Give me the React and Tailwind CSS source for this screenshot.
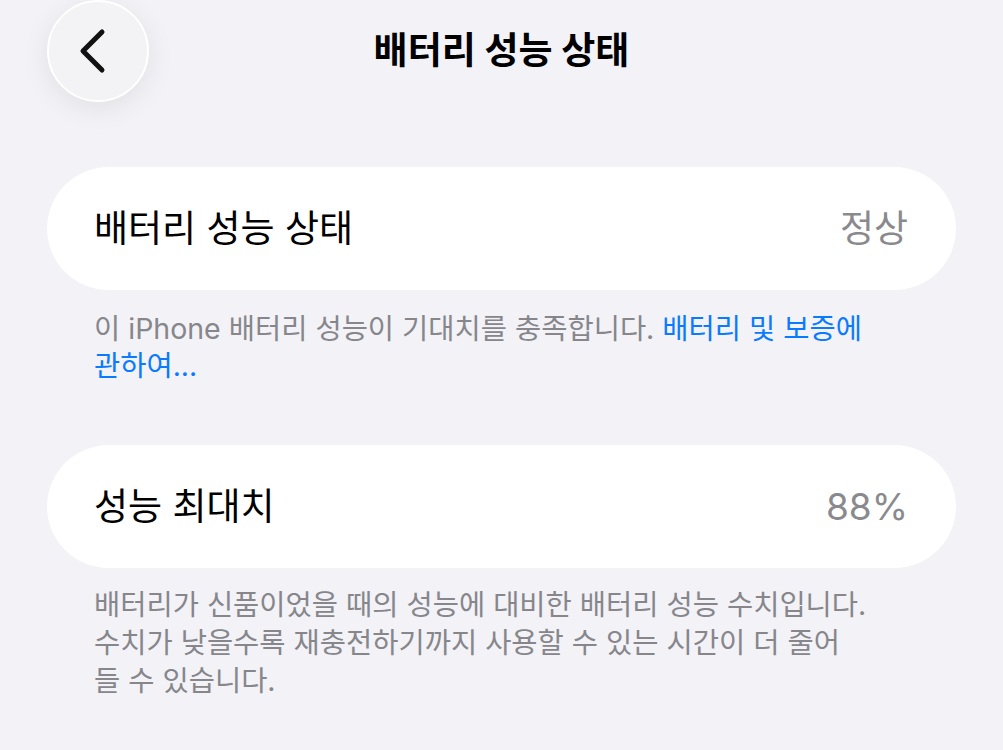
import React from "react";

const FONT = { fontFamily: '"Inter", "Noto Sans CJK KR", "Noto Sans", sans-serif' };

function Row({ label, value }) {
  return (
    <div className="mx-[47px] flex h-[123px] items-center justify-between rounded-full bg-white pl-[47px] pr-[48px]">
      <span className="text-[37px] text-black">{label}</span>
      <span className="text-[37px] text-[#8a8a8e]">{value}</span>
    </div>
  );
}

export default function App() {
  return (
    <div className="h-[750px] w-[1003px] overflow-hidden bg-[#f2f2f7]" style={FONT}>
      {/* header */}
      <div className="relative flex h-[102px] items-center justify-center">
        <button className="absolute left-[47px] top-0 flex h-[102px] w-[102px] items-center justify-center rounded-full border-2 border-white bg-[#f3f3f5] shadow-[0_6px_28px_rgba(0,0,0,0.08)]">
          <svg width="40" height="48" viewBox="0 0 40 48" fill="none">
            <path d="M24 5L5 24L24 43" stroke="#111" strokeWidth="5" strokeLinecap="round" strokeLinejoin="round" />
          </svg>
        </button>
        <h1 className="text-[37px] font-bold text-black">배터리 성능 상태</h1>
      </div>

      <div className="h-[65px]" />
      <Row label="배터리 성능 상태" value="정상" />
      <p className="px-[94px] pt-[20px] text-[28.5px] leading-[37px] text-[#86868b]">
        이 iPhone 배터리 성능이 기대치를 충족합니다. <span className="text-[#0a7aff]">배터리 및 보증에<br />관하여...</span>
      </p>

      <div className="h-[61px]" />
      <Row label="성능 최대치" value="88%" />
      <p className="px-[94px] pt-[18px] text-[28.5px] leading-[38px] text-[#86868b]">
        배터리가 신품이었을 때의 성능에 대비한 배터리 성능 수치입니다.
        <br />
        수치가 낮을수록 재충전하기까지 사용할 수 있는 시간이 더 줄어
        <br />
        들 수 있습니다.
      </p>
    </div>
  );
}
